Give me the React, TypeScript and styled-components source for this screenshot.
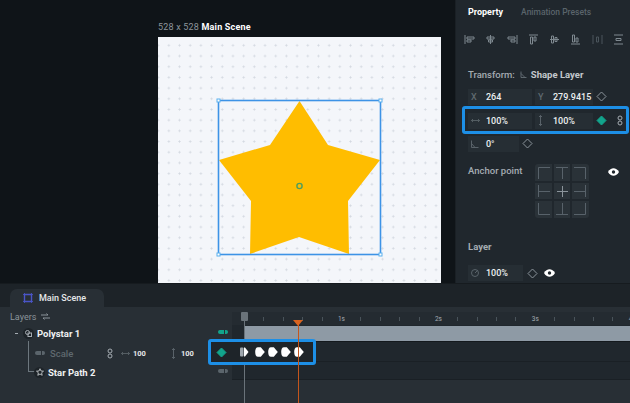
import styled, { createGlobalStyle } from "styled-components";

const GlobalStyle = createGlobalStyle`
    html, body {
        margin: 0;
        padding: 0;
        background: #20272d;
    }
    * {
        box-sizing: border-box;
    }
`;

const ALIGN_ICONS = [
    "M1 1v9M3 3h7v2H3zM3 6h4v2H3z",
    "M5.5 1v9M2 3h7v2H2zM3.5 6h4v2h-4z",
    "M10 1v9M1 3h7v2H1zM4 6h4v2H4z",
    "M1 1h9M2.5 3h2v7h-2zM6 3h2v4H6z",
    "M1 5.5h9M2.5 2h2v7h-2zM6 3.5h2v4H6z",
    "M1 10h9M2.5 1h2v7h-2zM6 4h2v4H6z",
    "M1 1v9M10 1v9M4.5 3h2v5h-2z",
    "M1 1h9M1 10h9M3 4.5h5v2H3z",
];

const ANCHOR_CELLS = [
    "M3.5 15V3.500H15",
    "M3 3.500h12M9.500 3.500V15",
    "M3 3.500h11.500V15",
    "M3.500 3v12M3.500 9.500H15",
    "M9.500 4v11M4 9.500h11",
    "M14.500 3v12M3 9.500h11.500",
    "M3.500 3v11.500H15",
    "M3 14.500h12M9.500 3v11.500",
    "M14.500 3v11.500H3",
];

const TICKS = Array.from({ length: 21 }, (_, index) => index);

function Diamond({ filled }: { filled?: boolean }) {
    return (
        <svg width="11" height="11" viewBox="0 0 11 11">
            <path d="M5.5 1 10 5.5 5.5 10 1 5.5z" fill={filled ? "#12a48c" : "none"} stroke={filled ? "#12a48c" : "#8b949b"} />
        </svg>
    );
}

function Eye() {
    return (
        <svg width="11" height="8" viewBox="0 0 11 8">
            <path d="M0 4c2.8-5 8.2-5 11 0-2.8 5-8.2 5-11 0z" fill="#fff" />
            <circle cx="5.5" cy="4" r="1.7" fill="#20272d" />
        </svg>
    );
}

function LinkIcon() {
    return (
        <svg width="6" height="11" viewBox="0 0 6 11" fill="none" stroke="#a5acb2">
            <rect x="1" y="1" width="4" height="4" rx="2" />
            <rect x="1" y="6" width="4" height="4" rx="2" />
        </svg>
    );
}

function ArrowH() {
    return (
        <svg width="9" height="5" viewBox="0 0 9 5" fill="none" stroke="#5f696f" strokeWidth="0.8">
            <path d="M0.500 2.500h8M2 1 0.500 2.500 2 4M7 1l1.500 1.500L7 4" />
        </svg>
    );
}

function ArrowV() {
    return (
        <svg width="5" height="11" viewBox="0 0 5 11" fill="none" stroke="#5f696f" strokeWidth="0.9">
            <path d="M2.500 0.500v10M1 2l1.500-1.500L4 2M1 9l1.500 1.500L4 9" />
        </svg>
    );
}

function AngleIcon() {
    return (
        <svg width="8" height="8" viewBox="0 0 8 8" fill="none" stroke="#5f696f" strokeWidth="0.9">
            <path d="M0.500 0.500v7h7M0.500 3.500 4 7.500" />
        </svg>
    );
}

function OpacityIcon() {
    return (
        <svg width="8" height="8" viewBox="0 0 8 8" fill="none" stroke="#5f696f" strokeWidth="0.9">
            <circle cx="4" cy="4" r="3.500" />
            <path d="M4 4 6.500 1.500" />
        </svg>
    );
}

function ShapeIcon() {
    return (
        <svg width="7" height="7" viewBox="0 0 7 7" fill="none" stroke="#6d777e" strokeWidth="0.8">
            <path d="M1 0.500v6h5.500M1 2.500 5 6.500" />
        </svg>
    );
}

function FirstKeyframe() {
    return (
        <svg width="12" height="10" viewBox="0 0 12 10">
            <rect x="0" y="0.500" width="3.500" height="9" rx="1" fill="#9ea6ad" />
            <path d="M4 0.500h1L8.500 5 5 9.500H4z" fill="#fff" />
        </svg>
    );
}

function Keyframe() {
    return (
        <svg width="10" height="10" viewBox="0 0 10 10">
            <path d="M3 0.300h2.800L9.800 5 5.800 9.700H3Q0.200 9.700 0.200 5T3 0.300z" fill="#fff" />
        </svg>
    );
}

function App() {
    return (
        <Root>
            <GlobalStyle />
            <Workspace>
                <Canvas>
                    <SceneTitle>
                        528 x 528 <strong>Main Scene</strong>
                    </SceneTitle>
                    <Paper>
                        <StarDrawing viewBox="0 0 283 246">
                            <polygon
                                points="141.5,64 170,108 222,123 190,164 191,217 141,200 92,217 93,164 61,123 112,108"
                                fill="#ffbd00"
                            />
                            <rect x="60.5" y="63.5" width="162" height="154" fill="none" stroke="#3d93e6" strokeWidth="1.6" />
                            {[
                                [60.5, 63.5],
                                [222.5, 63.5],
                                [60.5, 217.5],
                                [222.5, 217.5],
                            ].map(([x, y]) => (
                                <rect key={`${x}-${y}`} x={x - 1.5} y={y - 1.5} width="3" height="3" fill="#fff" stroke="#5ab0ee" />
                            ))}
                            <circle cx="141.5" cy="149" r="2.6" fill="#ffbd00" stroke="#4f9d5c" strokeWidth="1.4" />
                        </StarDrawing>
                    </Paper>
                </Canvas>
                <Panel>
                    <Tabs>
                        <Tab $active>Property</Tab>
                        <Tab>Animation Presets</Tab>
                    </Tabs>
                    <AlignRow>
                        {ALIGN_ICONS.map((path, index) => (
                            <svg key={path} width="11" height="11" viewBox="0 0 11 11" fill="none" stroke={index === 6 ? "#4b555c" : "#7f8990"}>
                                <path d={path} />
                            </svg>
                        ))}
                    </AlignRow>
                    <SectionTitle>
                        Transform:
                        <ShapeIcon />
                        <strong>Shape Layer</strong>
                    </SectionTitle>
                    <PositionRow>
                        <Field $width={64}>
                            <FieldLabel>X</FieldLabel>264
                        </Field>
                        <Field $width={58}>
                            <FieldLabel>Y</FieldLabel>279.9415
                        </Field>
                        <Diamond />
                    </PositionRow>
                    <ScaleRow>
                        <Field $width={64}>
                            <FieldLabel>
                                <ArrowH />
                            </FieldLabel>
                            100%
                        </Field>
                        <Field $width={58}>
                            <FieldLabel>
                                <ArrowV />
                            </FieldLabel>
                            100%
                        </Field>
                        <Diamond filled />
                        <LinkIcon />
                    </ScaleRow>
                    <RotationRow>
                        <Field $width={51}>
                            <FieldLabel>
                                <AngleIcon />
                            </FieldLabel>
                            0°
                        </Field>
                        <Diamond />
                    </RotationRow>
                    <AnchorSection>
                        <AnchorLabel>Anchor point</AnchorLabel>
                        <AnchorGrid>
                            {ANCHOR_CELLS.map((path, index) => (
                                <AnchorCell key={path}>
                                    <svg width="18" height="18" viewBox="0 0 18 18" fill="none" stroke={index === 4 ? "#8b949b" : "#58626a"}>
                                        <path d={path} />
                                    </svg>
                                </AnchorCell>
                            ))}
                        </AnchorGrid>
                        <AnchorEye>
                            <Eye />
                        </AnchorEye>
                    </AnchorSection>
                    <LayerTitle>Layer</LayerTitle>
                    <LayerRow>
                        <Field $width={55}>
                            <FieldLabel>
                                <OpacityIcon />
                            </FieldLabel>
                            100%
                        </Field>
                        <Diamond />
                        <Eye />
                    </LayerRow>
                </Panel>
            </Workspace>
            <Timeline>
                <TabStrip>
                    <SceneTab>
                        <svg width="10" height="10" viewBox="0 0 10 10" fill="none" stroke="#4a55c8" strokeWidth="1.4">
                            <path d="M1.5 1.5h7v7h-7z" />
                            <path d="M1.5 0v10M8.5 0v10M0 1.5h10M0 8.5h10" strokeWidth="0.8" />
                        </svg>
                        Main Scene
                    </SceneTab>
                </TabStrip>
                <TimelineBody>
                    <LayerList>
                        <LayersHeading>
                            Layers
                            <svg width="9" height="7" viewBox="0 0 9 7" fill="none" stroke="#8b949b">
                                <path d="M0 2h7L5.5.5M9 5H2l1.5 1.5" />
                            </svg>
                        </LayersHeading>
                        <TreeLine />
                        <PolystarRow>
                            <Collapse />
                            <LayerBadge>
                                <svg width="7" height="7" viewBox="0 0 7 7" fill="none" stroke="#a5acb2">
                                    <circle cx="2.5" cy="2.5" r="2" />
                                    <rect x="3" y="3" width="3.5" height="3.5" />
                                </svg>
                            </LayerBadge>
                            <LayerName>Polystar 1</LayerName>
                        </PolystarRow>
                        <ScalePropertyRow>
                            <MiniPill $color="#5b656c" />
                            <ScaleName>Scale</ScaleName>
                            <LinkIcon />
                            <ScaleArrow $left={121}>
                                <ArrowH />
                            </ScaleArrow>
                            <ScaleValue $left={133}>100</ScaleValue>
                            <ScaleArrow $left={171}>
                                <ArrowV />
                            </ScaleArrow>
                            <ScaleValue $left={181}>100</ScaleValue>
                        </ScalePropertyRow>
                        <StarPathRow>
                            <LayerBadge>
                                <svg width="8" height="8" viewBox="0 0 8 8" fill="none" stroke="#d6dadd" strokeWidth="0.8">
                                    <path d="M4 .7 5 3l2.500.2-1.900 1.600.6 2.500L4 6 1.800 7.300l.6-2.500L.5 3.200 3 3z" />
                                </svg>
                            </LayerBadge>
                            <LayerName>Star Path 2</LayerName>
                        </StarPathRow>
                    </LayerList>
                    <TrackGutter>
                        <MiniPill $color="#12a48c" />
                        <GutterSpacer />
                        <MiniPill $color="#5b656c" />
                    </TrackGutter>
                    <Tracks>
                        <Ruler>
                            {TICKS.map((tick) =>
                                tick % 5 === 0 && tick > 0 ? (
                                    <RulerLabel key={tick}>{tick / 5}s</RulerLabel>
                                ) : (
                                    <RulerTick key={tick} />
                                ),
                            )}
                        </Ruler>
                        <GreyTrack />
                        <KeyTrack />
                        <DarkTrack />
                    </Tracks>
                    <StartLine>
                        <StartHandle />
                    </StartLine>
                    <KeyHighlight>
                        <Diamond filled />
                        <Keyframes>
                            <FirstKeyframe />
                            <Keyframe />
                            <Keyframe />
                            <Keyframe />
                            <Keyframe />
                        </Keyframes>
                    </KeyHighlight>
                    <Playhead />
                </TimelineBody>
            </Timeline>
        </Root>
    );
}

const Root = styled.div`
    width: 630px;
    height: 403px;
    overflow: hidden;
    display: flex;
    flex-direction: column;
    background: #20272d;
    color: #fff;
    font-family: Roboto, "Liberation Sans", sans-serif;
    font-size: 9px;
`;

const Workspace = styled.div`
    height: 283px;
    display: flex;
`;

const Canvas = styled.div`
    width: 455px;
    padding: 21px 14px 0 158px;
    background: #0f1418;
`;

const SceneTitle = styled.div`
    height: 16px;
    line-height: 12px;
    color: #8d959b;
    font-size: 9px;
    letter-spacing: 0.2px;

    strong {
        color: #fff;
        font-weight: 700;
    }
`;

const Paper = styled.div`
    position: relative;
    width: 283px;
    height: 246px;
    background-color: #f4f6fa;
    background-image: radial-gradient(circle, #d3d8e0 0.9px, transparent 1.1px);
    background-size: 10.7px 10.7px;
    background-position: 5.5px 3px;
`;

const StarDrawing = styled.svg`
    position: absolute;
    inset: 0;
    width: 283px;
    height: 246px;
`;

const Panel = styled.div`
    width: 175px;
    padding: 0 0 0 12px;
    border-left: 1px solid #1a2025;
`;

const Tabs = styled.div`
    height: 23px;
    display: flex;
    align-items: center;
    gap: 18px;
`;

const Tab = styled.span<{ $active?: boolean }>`
    color: ${(props) => (props.$active ? "#fff" : "#5a646b")};
    font-size: ${(props) => (props.$active ? 9 : 8.5)}px;
    font-weight: ${(props) => (props.$active ? 700 : 500)};
`;

const AlignRow = styled.div`
    width: 160px;
    height: 11px;
    margin-top: 11px;
    margin-left: -4px;
    display: flex;
    justify-content: space-between;
`;

const SectionTitle = styled.div`
    height: 14px;
    margin-top: 22px;
    display: flex;
    align-items: center;
    gap: 4px;
    color: #a5acb2;
    font-size: 9.5px;
    font-weight: 500;

    svg {
        margin-left: 1px;
    }

    strong {
        color: #c3c8cc;
        font-weight: 700;
    }
`;

const FieldRow = styled.div`
    height: 23px;
    display: flex;
    align-items: center;
    gap: 3px;
`;

const PositionRow = styled(FieldRow)`
    margin-top: 4px;
`;

const ScaleRow = styled(FieldRow)`
    position: relative;
    height: 25px;

    &::before {
        content: "";
        position: absolute;
        top: -2px;
        bottom: -1px;
        left: -6px;
        right: 1px;
        border: 3px solid #1d8fe6;
        border-radius: 3px;
        pointer-events: none;
    }

    & > svg:last-child {
        margin-left: 7px;
    }
`;

const RotationRow = styled(FieldRow)`
    margin-top: -1px;
`;

const Field = styled.div<{ $width: number }>`
    width: ${(props) => props.$width}px;
    height: 16px;
    padding-left: 3px;
    display: flex;
    align-items: center;
    background: #262e34;
    color: #eceef0;
    font-size: 9px;
    font-weight: 500;
`;

const FieldLabel = styled.span`
    width: 15px;
    display: flex;
    align-items: center;
    color: #5f696f;
    font-size: 9px;
`;

const AnchorSection = styled.div`
    margin-top: 9px;
    height: 54px;
    display: flex;
`;

const AnchorLabel = styled.div`
    width: 67px;
    padding-top: 1px;
    color: #a5acb2;
    font-size: 9.5px;
    font-weight: 500;
`;

const AnchorGrid = styled.div`
    width: 54px;
    height: 54px;
    display: grid;
    grid-template-columns: repeat(3, 18px);
    grid-template-rows: repeat(3, 18px);
    background: #2a3238;
    border-radius: 3px;
    overflow: hidden;
`;

const AnchorCell = styled.div`
    display: flex;
    outline: 0.5px solid #20272d;
`;

const AnchorEye = styled.div`
    margin: 4px 0 0 19px;
`;

const LayerTitle = styled.div`
    margin-top: 23px;
    height: 13px;
    color: #a5acb2;
    font-size: 9.5px;
    font-weight: 700;
`;

const LayerRow = styled.div`
    margin-top: 10px;
    height: 18px;
    display: flex;
    align-items: center;
    gap: 4px;

    & > svg:last-child {
        margin-left: 2px;
    }
`;

const Timeline = styled.div`
    height: 120px;
    display: flex;
    flex-direction: column;
    background: #282f35;
`;

const TabStrip = styled.div`
    height: 24px;
    padding: 5px 0 0 10px;
    background: #1d2328;
    border-top: 1px solid #161b1f;
`;

const SceneTab = styled.div`
    width: 94px;
    height: 18px;
    padding-left: 13px;
    display: flex;
    align-items: center;
    gap: 6px;
    background: #282f35;
    border-radius: 7px 7px 0 0;
    color: #e6e8ea;
    font-size: 9px;
    font-weight: 500;
`;

const TimelineBody = styled.div`
    position: relative;
    flex: 1;
    display: flex;
`;

const LayerList = styled.div`
    position: relative;
    width: 217px;
    flex: none;
`;

const LayersHeading = styled.div`
    height: 19px;
    padding-left: 10px;
    display: flex;
    align-items: center;
    gap: 5px;
    color: #8b949b;
    font-size: 9px;
`;

const TreeLine = styled.div`
    position: absolute;
    left: 28px;
    top: 34px;
    width: 8px;
    height: 31px;
    border-left: 1px solid #6d777e;
    border-bottom: 1px solid #6d777e;
`;

const PolystarRow = styled.div`
    height: 14px;
    padding-left: 15px;
    display: flex;
    align-items: center;
`;

const Collapse = styled.span`
    width: 3px;
    height: 1px;
    margin-right: 5px;
    background: #a5acb2;
`;

const LayerBadge = styled.span`
    position: relative;
    width: 11px;
    height: 11px;
    margin-right: 3px;
    display: flex;
    align-items: center;
    justify-content: center;
    border-radius: 50%;
    background: #1d2328;
`;

const LayerName = styled.span`
    color: #f0f2f3;
    font-size: 9.5px;
    font-weight: 700;
`;

const ScalePropertyRow = styled.div`
    position: relative;
    height: 26px;
    padding-left: 35px;
    display: flex;
    align-items: center;

    & > svg {
        margin-left: 23px;
    }
`;

const MiniPill = styled.span<{ $color: string }>`
    flex: none;
    width: 10px;
    height: 4px;
    border-radius: 2px;
    background: linear-gradient(
        to right,
        ${(props) => props.$color} 0 60%,
        transparent 60% 70%,
        ${(props) => props.$color} 70%
    );
`;

const ScaleName = styled.span`
    width: 34px;
    margin-left: 5px;
    color: #5f696f;
    font-size: 9.5px;
    font-weight: 500;
`;

const ScaleArrow = styled.span<{ $left: number }>`
    position: absolute;
    left: ${(props) => props.$left}px;
    display: flex;
`;

const ScaleValue = styled.span<{ $left: number }>`
    position: absolute;
    left: ${(props) => props.$left}px;
    color: #e6e8ea;
    font-size: 7.5px;
    font-weight: 700;
`;

const StarPathRow = styled.div`
    height: 12px;
    padding-left: 34px;
    display: flex;
    align-items: center;
`;

const TrackGutter = styled.div`
    flex: none;
    width: 15px;
    padding: 23px 3px 0 0;
    display: flex;
    flex-direction: column;
    align-items: center;
`;

const GutterSpacer = styled.div`
    height: 35px;
`;

const Tracks = styled.div`
    flex: 1;
    min-width: 0;
    overflow: hidden;
    height: 68px;
    margin-top: 5px;
    background: #20272d;
`;

const Ruler = styled.div`
    height: 13px;
    padding-left: 12px;
    display: flex;
    align-items: center;
    background: #242b31;
`;

const RulerTick = styled.span`
    flex: 0 0 19.4px;
    height: 4px;
    border-left: 1px solid #49535a;
`;

const RulerLabel = styled.span`
    flex: 0 0 19.4px;
    margin-left: -3px;
    margin-right: 3px;
    color: #a5acb2;
    font-size: 6.5px;
`;

const GreyTrack = styled.div`
    height: 15px;
    margin-top: 1px;
    margin-left: 12px;
    background: #8e9aa5;
`;

const DarkTrack = styled.div`
    height: 18px;
    border-bottom: 1px solid #1a2025;
    background: #20272d;
`;

const KeyTrack = styled(DarkTrack)`
    height: 21px;
    border-top: 1px solid #14191d;
`;

const StartLine = styled.div`
    position: absolute;
    left: 244px;
    top: 5px;
    bottom: 0;
    width: 1px;
    background: #6a737a;
`;

const StartHandle = styled.div`
    position: absolute;
    left: -3px;
    top: 0;
    width: 7px;
    height: 9px;
    border-radius: 1px;
    background: #6a737a;
`;

const KeyHighlight = styled.div`
    position: absolute;
    left: 208px;
    top: 32px;
    width: 108px;
    height: 26px;
    padding-left: 5px;
    display: flex;
    align-items: center;
    gap: 13px;
    border: 3px solid #1d8fe6;
    border-radius: 3px;
    background: #1e2429;
`;

const Keyframes = styled.div`
    display: flex;
    gap: 3px;
`;

const Playhead = styled.div`
    position: absolute;
    left: 298px;
    top: 13px;
    bottom: 0;
    width: 1px;
    background: #c4561c;

    &::before {
        content: "";
        position: absolute;
        left: -5px;
        top: 0;
        border-left: 5.5px solid transparent;
        border-right: 5.5px solid transparent;
        border-top: 6px solid #d9631f;
    }
`;

export default App;
